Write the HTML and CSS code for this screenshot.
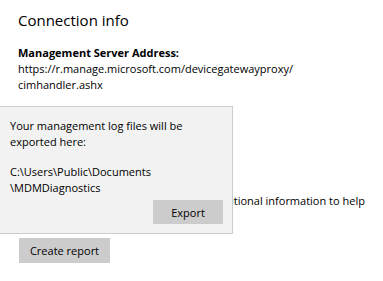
FILE: index.html
```html
<!DOCTYPE html>
<html lang="en">
<head>
    <meta charset="UTF-8">
    <meta name="viewport" content="width=device-width, initial-scale=1.0">
    <title>Connection info</title>
    <link rel="stylesheet" href="styles.css">
</head>
<body>
    <div class="page">
        <h1>Connection info</h1>
        <div class="field">
            <div class="label">Management Server Address:</div>
            <div class="value">https://r.manage.microsoft.com/devicegatewayproxy/<br>cimhandler.ashx</div>
        </div>

        <div class="section">
            <p class="hint">Your IT or support person may need additional information to help</p>
            <button class="btn report">Create report</button>
        </div>

        <!-- flyout shown after clicking Create report -->
        <div class="flyout">
            <p>Your management log files will be exported here:</p>
            <p>C:\Users\Public\Documents<br>\MDMDiagnostics</p>
            <div class="flyout-actions">
                <button class="btn">Export</button>
            </div>
        </div>
    </div>
</body>
</html>
```

FILE: styles.css
```css
body {
    margin: 0;
    background: #fff;
    color: #000;
    font-family: "Open Sans", "Noto Sans", sans-serif;
    font-size: 11px;
    line-height: 16px;
}
.page {
    position: relative;
    padding: 0 18px;
    height: 281px;
    overflow: hidden;
}
h1 {
    margin: 0;
    padding-top: 9px;
    font-size: 15px;
    font-weight: 400;
    line-height: 22px;
}
.field {
    margin-top: 14px;
}
.label {
    font-weight: 700;
}
.section {
    margin-top: 100px;
}
.hint {
    margin: 0;
    white-space: nowrap;
    text-indent: 5px;
}
.btn {
    font-family: inherit;
    font-size: 11px;
    color: #000;
    background: #ccc;
    border: none;
    border-radius: 0;
    height: 25px;
    padding: 0;
}
.report {
    margin: 29px 0 0 1px;
    width: 91px;
}
.flyout {
    position: absolute;
    left: 0;
    top: 106px;
    width: 213px;
    height: 106px;
    padding: 11px 9px 9px 10px;
    background: #f2f2f2;
    border: 1px solid #ccc;
    border-left: none;
    display: flex;
    flex-direction: column;
}
.flyout p {
    margin: 0 0 14px;
}
.flyout p:last-of-type {
    margin-bottom: 0;
}
.flyout-actions {
    margin-top: auto;
    display: flex;
    justify-content: flex-end;
}
.flyout-actions .btn {
    width: 70px;
    height: 24px;
}
```
